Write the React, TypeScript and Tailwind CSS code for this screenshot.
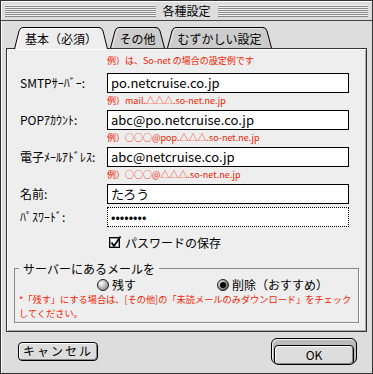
import React from "react";

const red = "text-[#ee2200]";

function Tab({
    label,
    width,
    className,
    active,
}: {
    label: string;
    width: number;
    className: string;
    active?: boolean;
}) {
    const h = active ? 22 : 21;
    const w = width;
    const d = `M0.5,${h} L5,4 Q6,0.5 9,0.5 L${w - 9},0.5 Q${w - 6},0.5 ${w - 5},4 L${w - 0.5},${h}`;
    const hl = `M2.5,${h} L6.5,4.5 Q7.2,1.5 9.5,1.5 L${w - 10},1.5`;
    return (
        <div
            className={`relative h-[21px] flex items-center justify-center text-[12px] leading-[14px] pt-[2px] ${className} ${
                active ? "z-10" : ""
            }`}
        >
            <svg
                className="absolute left-0 top-0 overflow-visible"
                width={w}
                height={h}
            >
                <path d={d} fill={active ? "#eeeeee" : "#cccccc"} stroke="#000" />
                <path d={hl} fill="none" stroke={active ? "#ffffff" : "#e6e6e6"} />
            </svg>
            <span className="relative">{label}</span>
        </div>
    );
}

function Field({ label, value, dotted }: { label: string; value: string; dotted?: boolean }) {
    return (
        <div className="flex items-center h-[20px]">
            <div className="w-[87px] text-[12px] leading-[14px]">{label}</div>
            <div
                className={`w-[242px] h-[20px] bg-white pl-[3px] text-[13px] leading-[18px] ${
                    dotted ? "border border-dotted border-black" : "border border-black"
                }`}
            >
                {value}
            </div>
        </div>
    );
}

function Hint({ text }: { text: string }) {
    return (
        <p className={`ml-[87px] h-[17px] pt-[2px] text-[9px] leading-[12px] ${red}`}>
            {text}
        </p>
    );
}

function Radio({ checked }: { checked?: boolean }) {
    return (
        <svg width="12" height="12" viewBox="0 0 12 12">
            <defs>
                <radialGradient id={checked ? "rg1" : "rg0"} cx="0.35" cy="0.35" r="0.7">
                    <stop offset="0" stopColor="#ffffff" />
                    <stop offset="1" stopColor={checked ? "#555555" : "#888888"} />
                </radialGradient>
            </defs>
            <circle
                cx="6"
                cy="6"
                r="5.5"
                fill={`url(#${checked ? "rg1" : "rg0"})`}
                stroke="#222"
            />
            {checked && <circle cx="6" cy="6" r="3" fill="#000" />}
        </svg>
    );
}

export default function App() {
    return (
        <div className="w-[373px] h-[374px] bg-[#dddddd] border border-[#333] flex flex-col font-['Noto_Sans_CJK_JP','Noto_Sans',sans-serif] text-black">
            {/* title bar */}
            <div className="h-[20px] shrink-0 border-b border-[#444] flex items-center px-[4px] shadow-[inset_1px_1px_0_#fff]">
                <div className="flex-1 h-[12px] bg-[image:repeating-linear-gradient(to_bottom,#f4f4f4_0px,#f4f4f4_1px,#888_1px,#888_2px)]" />
                <div className="px-[7px] text-[12px] leading-[14px]">各種設定</div>
                <div className="flex-1 h-[12px] bg-[image:repeating-linear-gradient(to_bottom,#f4f4f4_0px,#f4f4f4_1px,#888_1px,#888_2px)]" />
            </div>

            <div className="flex-1 pl-[5px] pr-[5px] pt-[6px] shadow-[inset_1px_0_0_#fff]">
                {/* tabs */}
                <div className="flex gap-[2px] ml-[8px] h-[21px]">
                    <Tab label="基本（必須）" width={94} className="w-[94px]" active />
                    <Tab label="その他" width={55} className="w-[55px]" />
                    <Tab label="むずかしい設定" width={105} className="w-[105px]" />
                </div>

                {/* panel */}
                <div className="h-[284px] border border-[#333] bg-[#eeeeee] shadow-[inset_1px_1px_0_#fff,inset_-1px_-1px_0_#aaa]">
                    <div className="pl-[13px] pt-[6px]">
                        <p className={`ml-[87px] h-[18px] text-[9px] leading-[12px] ${red}`}>
                            例）は、So-net の場合の設定例です
                        </p>
                        <Field label="SMTPｻｰﾊﾞｰ:" value="po.netcruise.co.jp" />
                        <Hint text="例）mail.△△△.so-net.ne.jp" />
                        <Field label="POPｱｶｳﾝﾄ:" value="abc@po.netcruise.co.jp" />
                        <Hint text="例）○○○@pop.△△△.so-net.ne.jp" />
                        <Field label="電子ﾒｰﾙｱﾄﾞﾚｽ:" value="abc@netcruise.co.jp" />
                        <Hint text="例）○○○@△△△.so-net.ne.jp" />
                        <Field label="名前:" value="たろう" />
                        <div className="h-[3px]" />
                        <Field label="ﾊﾟｽﾜｰﾄﾞ:" value="••••••••" dotted />
                        <div className="flex items-center gap-[3px] ml-[89px] mt-[9px] h-[13px]">
                            <svg width="13" height="13" viewBox="0 0 13 13" className="overflow-visible">
                                <rect x="0.5" y="1.5" width="10" height="10" fill="#fff" stroke="#000" />
                                <rect x="1.5" y="2.5" width="8" height="8" fill="none" stroke="#999" />
                                <path d="M2.5,6.5 L5,10 L11.5,0.5" fill="none" stroke="#000" strokeWidth="1.8" />
                            </svg>
                            <span className="text-[12px] leading-[14px]">パスワードの保存</span>
                        </div>
                    </div>

                    <fieldset className="mx-[7px] mt-[13px] border border-[#888] px-[4px] pb-[2px] shadow-[1px_1px_0_#fff]">
                        <legend className="px-[4px] text-[12px] leading-[13px]">
                            サーバーにあるメールを
                        </legend>
                        <div className="flex items-center h-[17px] pt-[2px] ml-[78px] text-[12px] leading-[12px]">
                            <div className="flex items-center gap-[3px] w-[120px]">
                                <Radio />
                                <span>残す</span>
                            </div>
                            <div className="flex items-center gap-[3px]">
                                <Radio checked />
                                <span>削除（おすすめ）</span>
                            </div>
                        </div>
                        <p className={`text-[9.2px] leading-[14px] whitespace-nowrap ${red}`}>
                            *「残す」にする場合は、[その他]の「未読メールのみダウンロード」をチェック
                        </p>
                        <p className={`text-[9.2px] leading-[14px] ${red}`}>してください。</p>
                    </fieldset>
                </div>

                {/* buttons */}
                <div className="flex items-center justify-between pl-[12px] pr-[10px] pt-[6px]">
                    <button className="w-[80px] h-[19px] rounded-[4px] border border-black bg-[#dddddd] shadow-[inset_1px_1px_0_#fff,inset_-1px_-1px_0_#888] text-[12px] leading-[14px] tracking-[2px]">
                        キャンセル
                    </button>
                    <div className="w-[86px] h-[26px] rounded-[6px] border border-black bg-[#bbbbbb] p-[2px] shadow-[inset_1px_1px_0_#eee]">
                        <button className="w-full h-full rounded-[4px] border border-black bg-[#dddddd] shadow-[inset_1px_1px_0_#fff,inset_-1px_-1px_0_#888] text-[12px] leading-[14px]">
                            OK
                        </button>
                    </div>
                </div>
            </div>
        </div>
    );
}
